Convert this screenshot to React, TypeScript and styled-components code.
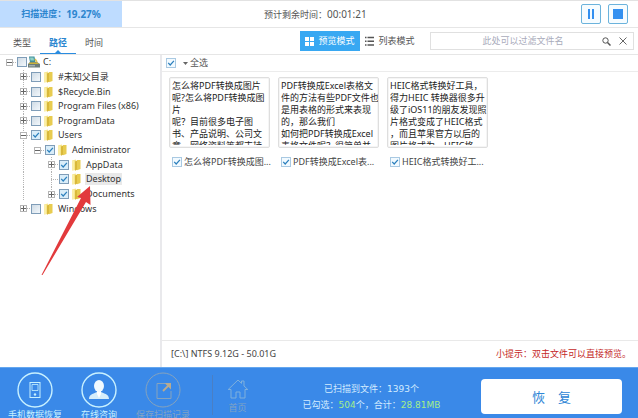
import React from "react";
import styled, { createGlobalStyle, css } from "styled-components";

const GlobalStyle = createGlobalStyle`
  * { box-sizing: border-box; }
  body {
    margin: 0;
    overflow: hidden;
    background: #fff;
    color: #444;
    font: 9px/12px "Noto Sans", "Noto Sans CJK SC", sans-serif;
  }
  button, input { font: inherit; color: inherit; }
`;

const Window = styled.div`
  height: 100vh;
  display: flex;
  flex-direction: column;
  border-top: 1px solid #e2e2e2;
`;

const Header = styled.header`
  flex: none;
  height: 27px;
  display: flex;
  align-items: center;
  border-bottom: 1px solid #e6e6e6;
`;

const Progress = styled.div`
  align-self: stretch;
  width: 122px;
  display: flex;
  align-items: center;
  justify-content: center;
  background: #bedcff;
  color: #2e86cf;
  font-weight: 700;
`;

const Remaining = styled.div`
  flex: 1;
  padding-left: 142px;
  color: #555;
`;

const Figure = styled.span`
  font-size: 10px;
`;

const HeaderActions = styled.div`
  display: flex;
  gap: 7px;
  padding-right: 10px;
`;

const ControlButton = styled.button`
  width: 20px;
  height: 20px;
  padding: 0;
  display: grid;
  place-items: center;
  border: 1px solid #6bb3dc;
  border-radius: 2px;
  background: #f6fcff;
  color: #3390f0;
`;

const Toolbar = styled.div`
  flex: none;
  height: 27px;
  display: flex;
  align-items: center;
  border-bottom: 1px solid #e6e6e6;
`;

const Tabs = styled.nav`
  align-self: stretch;
  flex: 1;
  display: flex;
  padding-left: 4px;
`;

const Tab = styled.button<{ $active?: boolean }>`
  position: relative;
  width: 36px;
  padding: 4px 0 0;
  border: 0;
  border-bottom: 1px solid transparent;
  background: none;
  color: #555;
  ${(p) =>
    p.$active &&
    css`
      color: #2a86d0;
      font-weight: 700;
      border-bottom-color: #2a8ce0;
      &::after {
        content: "";
        position: absolute;
        left: 15px;
        bottom: 0;
        border: 3px solid transparent;
        border-top: 0;
        border-bottom-color: #2a8ce0;
      }
    `}
`;

const ModeButton = styled.button<{ $active?: boolean }>`
  height: 20px;
  width: 60px;
  padding: 0;
  display: flex;
  align-items: center;
  justify-content: center;
  gap: 4px;
  border: 0;
  white-space: nowrap;
  background: ${(p) => (p.$active ? "#38a8f2" : "none")};
  color: ${(p) => (p.$active ? "#fff" : "#555")};
`;

const SearchBox = styled.div`
  width: 204px;
  height: 18px;
  margin: 0 4px 0 10px;
  padding-right: 6px;
  display: flex;
  align-items: center;
  gap: 8px;
  border: 1px solid #e0e0e0;
`;

const SearchInput = styled.input`
  flex: 1;
  min-width: 0;
  padding: 0 0 0 21px;
  border: 0;
  outline: 0;
  background: none;
  text-align: center;
  &::placeholder { color: #a9abbb; opacity: 1; }
`;

const IconButton = styled.button`
  padding: 0;
  display: flex;
  border: 0;
  background: none;
  color: #555;
`;

const Body = styled.main`
  flex: 1;
  min-height: 0;
  display: flex;
`;

const TreePane = styled.aside`
  position: relative;
  flex: none;
  width: 162px;
  border-right: 2px solid #e9e9ec;
`;

const Tree = styled.ul`
  height: 161px;
  margin: 0;
  padding: 0 0 0 3px;
  display: grid;
  grid-auto-rows: 1fr;
  list-style: none;
`;

const TreeRow = styled.li`
  display: flex;
  align-items: center;
  color: #333;
`;

const Cell = styled.span<{ $line?: boolean; $dash?: boolean }>`
  align-self: stretch;
  width: 14px;
  padding-left: 3px;
  display: flex;
  align-items: center;
  background:
    ${(p) => (p.$line ? "repeating-linear-gradient(#b4b4b4 0 1px, transparent 1px 2px) 6px 0 / 1px 100% no-repeat" : "none")},
    ${(p) => (p.$dash ? "repeating-linear-gradient(90deg, #b4b4b4 0 1px, transparent 1px 2px) 6px 50% / 8px 1px no-repeat" : "none")};
`;

const Toggle = styled.button`
  width: 7px;
  height: 7px;
  padding: 0;
  display: block;
  border: 1px solid #b5b5b5;
  background: #fff;
  svg { display: block; }
`;

const CheckBox = styled.input<{ $flat?: boolean }>`
  appearance: none;
  flex: none;
  width: 10px;
  height: 10px;
  margin: 0;
  border: 1px solid ${(p) => (p.$flat ? "#a9c9e2" : "#7f9db8")};
  background: ${(p) => (p.$flat ? "#f5fbff" : "linear-gradient(135deg, #cfdbe5, #f3f8fc)")};
  &:checked {
    background:
      url("data:image/svg+xml,%3Csvg xmlns='http://www.w3.org/2000/svg' viewBox='0 0 8 8'%3E%3Cpath d='M1.2 3.8 3.2 6 6.9 1.8' fill='none' stroke='%232b7fbd' stroke-width='1.2'/%3E%3C/svg%3E") center / 8px 8px no-repeat,
      ${(p) => (p.$flat ? "#f2faff" : "#d9edf9")};
  }
`;

const NodeLabel = styled.label<{ $selected?: boolean; $root?: boolean }>`
  display: flex;
  align-items: center;
  gap: ${(p) => (p.$root ? "2px" : "4px")};
  padding-left: ${(p) => (p.$root ? "1px" : "3px")};
  white-space: nowrap;
  svg { flex: none; }
  span {
    padding: 0 1px;
    background: ${(p) => (p.$selected ? "#e9e9e9" : "none")};
  }
`;

const Arrow = styled.svg`
  position: absolute;
  left: 40px;
  top: 130px;
  pointer-events: none;
`;

const Content = styled.section`
  flex: 1;
  min-width: 0;
  display: flex;
  flex-direction: column;
`;

const SelectAll = styled.label`
  flex: none;
  height: 17px;
  padding-left: 4px;
  display: flex;
  align-items: center;
  border-bottom: 1px solid #ececec;
  color: #555;
  svg { margin: 0 2px 0 7px; }
`;

const Files = styled.div`
  flex: 1;
  min-height: 0;
  padding: 5px 7px;
  display: flex;
  align-items: flex-start;
  gap: 8px;
`;

const FileItem = styled.article`
  width: 101px;
`;

const Preview = styled.div`
  height: 71px;
  padding: 2px 0 0 2px;
  border: 1px solid #dedede;
  border-radius: 2px;
  box-shadow: inset 0 0 0 1px #f5f5f5;
  color: #222;
`;

const PreviewText = styled.div`
  height: 65px;
  overflow: hidden;
  white-space: pre;
`;

const Caption = styled.label`
  margin-top: 8px;
  padding-left: 3px;
  display: flex;
  align-items: center;
  gap: 2px;
  white-space: nowrap;
`;

const StatusBar = styled.div`
  flex: none;
  height: 27px;
  padding: 0 7px 0 9px;
  display: flex;
  align-items: center;
  justify-content: space-between;
  border-top: 1px solid #e9e9e9;
`;

const Tip = styled.span`
  color: #c41f27;
`;

const Footer = styled.footer`
  flex: none;
  height: 51px;
  display: flex;
  align-items: flex-start;
  overflow: hidden;
  border-top: 1px solid #64a7ef;
  background: #3a89e8;
  color: #fff;
`;

const FooterButton = styled.button<{ $muted?: boolean }>`
  width: 64px;
  padding: 4px 0 0;
  display: flex;
  flex-direction: column;
  align-items: center;
  gap: 1px;
  border: 0;
  background: none;
  white-space: nowrap;
  color: ${(p) => (p.$muted ? "#82a3c4" : "#c8f1ff")};
  svg { display: block; }
`;

const FooterNav = styled.nav`
  display: flex;
  padding-left: 3px;
`;

const HomeButton = styled(FooterButton)`
  width: 50px;
  height: 40px;
  margin: 7px 0 0 17px;
  border-left: 1px solid #4a7fc4;
  gap: 3px;
`;

const Stats = styled.div`
  flex: 1;
  padding-top: 13px;
  text-align: center;
  line-height: 16px;
  color: #d4ecff;
  font-family: "DejaVu Sans", "Noto Sans CJK SC", sans-serif;
  p { margin: 0; }
  em { font-style: normal; color: #a5ee8a; }
`;

const RecoverButton = styled.button`
  width: 141px;
  height: 35px;
  margin: 11px 16px 0 0;
  padding: 0;
  border: 0;
  border-radius: 4px;
  background: #fff;
  color: #2e86d6;
  font-size: 13px;
  white-space: pre;
`;

const Folder = () => (
  <svg width="9" height="12" viewBox="0 0 9 12">
    <path d="M0 1.5 4 .5V11L0 11.5Z" fill="#f6e58b" />
    <path d="M3 2.5 6 1 6.4 10 3 11.8Z" fill="#d9b83a" />
    <path d="M5 1h3.5v9L5 11.3Z" fill="#e8cc50" />
    <path d="M1 2v9" stroke="#fff7c5" />
  </svg>
);

const Drive = () => (
  <svg width="12" height="12" viewBox="0 0 12 12">
    <path d="M1 .5h5.500l1 6H2Z" fill="#3f8f9c" />
    <path d="M2 1.500h3.500l.5 3H2.500Z" fill="#8fd0c4" />
    <path d="m0 8 2-2h7l3 2v3.500H0Z" fill="#6c7c7a" />
    <path d="m.5 8 1.500-1.500h7L11.500 8Z" fill="#c9b43c" />
    <path d="M1 9.800h6" stroke="#bcc7c7" />
    <path d="M7 3 9 6" stroke="#e0c24d" strokeWidth="1.500" />
  </svg>
);

type Node = {
  name: string;
  level: number;
  toggle?: "plus" | "minus";
  checked?: boolean;
  selected?: boolean;
  lines?: number[];
};

const nodes: Node[] = [
  { name: "C:", level: 0, toggle: "minus" },
  { name: "#未知父目录", level: 1, toggle: "plus", lines: [1] },
  { name: "$Recycle.Bin", level: 1, toggle: "plus", lines: [1] },
  { name: "Program Files (x86)", level: 1, toggle: "plus", lines: [1] },
  { name: "ProgramData", level: 1, toggle: "plus", lines: [1] },
  { name: "Users", level: 1, toggle: "minus", checked: true, lines: [1] },
  { name: "Administrator", level: 2, toggle: "minus", checked: true, lines: [1] },
  { name: "AppData", level: 3, toggle: "plus", checked: true, lines: [1, 3] },
  { name: "Desktop", level: 3, checked: true, selected: true, lines: [1, 3] },
  { name: "Documents", level: 3, toggle: "plus", checked: true, lines: [1, 3] },
  { name: "Windows", level: 1, toggle: "plus" },
];

const files = [
  {
    name: "怎么将PDF转换成图...",
    text: "怎么将PDF转换成图片\n呢?怎么将PDF转换成图\n片\n呢？目前很多电子图\n书、产品说明、公司文\n章、网络资料等都支持",
  },
  {
    name: "PDF转换成Excel表...",
    text: "PDF转换成Excel表格文\n件的方法有些PDF文件也\n是用表格的形式来表现\n的，那么我们\n如何把PDF转换成Excel\n表格文件呢？很简单并",
  },
  {
    name: "HEIC格式转换好工...",
    text: "HEIC格式转换好工具，\n得力HEIC 转换器很多升\n级了iOS11的朋友发现照\n片格式变成了HEIC格式\n，而且苹果官方以后的\n图片格式为，HEIC格",
  },
];

function TreeNode({ node }: { node: Node }) {
  const id = `node-${node.name}`;
  return (
    <TreeRow>
      {Array.from({ length: node.level + 1 }, (_, i) => (
        <Cell key={i} $line={node.lines?.includes(i)} $dash={i === node.level}>
          {i === node.level && node.toggle && (
            <Toggle aria-label={node.toggle === "plus" ? "展开" : "折叠"}>
              <svg width="5" height="5" stroke="#666">
                <path d={node.toggle === "plus" ? "M0 2.5h5M2.500 0v5" : "M0 2.5h5"} />
              </svg>
            </Toggle>
          )}
        </Cell>
      ))}
      <CheckBox id={id} type="checkbox" defaultChecked={node.checked} />
      <NodeLabel htmlFor={id} $selected={node.selected} $root={node.level === 0}>
        {node.level === 0 ? <Drive /> : <Folder />}
        <span>{node.name}</span>
      </NodeLabel>
    </TreeRow>
  );
}

export default function App() {
  return (
    <Window>
      <GlobalStyle />
      <Header>
        <Progress>
          扫描进度：<Figure>19.27%</Figure>
        </Progress>
        <Remaining>
          预计剩余时间：<Figure>00:01:21</Figure>
        </Remaining>
        <HeaderActions>
          <ControlButton aria-label="暂停">
            <svg width="10" height="10" fill="currentColor">
              <path d="M2 0h2v10H2ZM6 0h2v10H6Z" />
            </svg>
          </ControlButton>
          <ControlButton aria-label="停止">
            <svg width="10" height="10" fill="currentColor">
              <path d="M0 0h10v10H0Z" />
            </svg>
          </ControlButton>
        </HeaderActions>
      </Header>
      <Toolbar>
        <Tabs>
          <Tab>类型</Tab>
          <Tab $active>路径</Tab>
          <Tab>时间</Tab>
        </Tabs>
        <ModeButton $active>
          <svg width="9" height="9" fill="currentColor">
            <path d="M0 0h4v4H0ZM5 0h4v4H5ZM0 5h4v4H0ZM5 5h4v4H5Z" />
          </svg>
          预览模式
        </ModeButton>
        <ModeButton>
          <svg width="9" height="10" fill="none" stroke="currentColor" strokeWidth="1.400">
            <path d="M0 1.500h1.500M2.500 1.500H9M0 5.200h1.500M2.500 5.200H9M0 9h1.500M2.500 9H9" />
          </svg>
          列表模式
        </ModeButton>
        <SearchBox>
          <SearchInput aria-label="过滤文件名" placeholder="此处可以过滤文件名" />
          <IconButton aria-label="搜索">
            <svg width="9" height="9" fill="none" stroke="currentColor">
              <circle cx="3.500" cy="3.500" r="2.700" />
              <path d="m5.500 5.500 3 3" strokeWidth="1.500" />
            </svg>
          </IconButton>
          <IconButton aria-label="清除">
            <svg width="8" height="8" stroke="currentColor">
              <path d="m.5.5 7 7m0-7-7 7" strokeWidth=".9" />
            </svg>
          </IconButton>
        </SearchBox>
      </Toolbar>
      <Body>
        <TreePane>
          <Tree>
            {nodes.map((node) => (
              <TreeNode key={node.name} node={node} />
            ))}
          </Tree>
          <Arrow width="54" height="92">
            <path d="M1.500 90 41 13 37 12 50 1 50.500 20 46 17 2.500 90Z" fill="#e23a3c" />
          </Arrow>
        </TreePane>
        <Content>
          <SelectAll>
            <CheckBox type="checkbox" $flat defaultChecked />
            <svg width="5" height="3" fill="#666">
              <path d="M0 0h5L2.500 3Z" />
            </svg>
            全选
          </SelectAll>
          <Files>
            {files.map((file) => (
              <FileItem key={file.name}>
                <Preview>
                  <PreviewText>{file.text}</PreviewText>
                </Preview>
                <Caption>
                  <CheckBox type="checkbox" $flat defaultChecked />
                  {file.name}
                </Caption>
              </FileItem>
            ))}
          </Files>
          <StatusBar>
            <span>[C:\] NTFS 9.12G - 50.01G</span>
            <Tip>小提示：双击文件可以直接预览。</Tip>
          </StatusBar>
        </Content>
      </Body>
      <Footer>
        <FooterNav>
          <FooterButton>
            <svg width="36" height="36" fill="none" stroke="currentColor">
              <circle cx="18" cy="18" r="17" strokeWidth="1.400" />
              <rect x="13" y="10.500" width="10" height="15" />
              <path d="M15 12.500h6v6h-6Z" strokeWidth=".8" />
              <circle cx="18" cy="22.500" r="1.200" fill="currentColor" stroke="none" />
            </svg>
            手机数据恢复
          </FooterButton>
          <FooterButton>
            <svg width="36" height="36" fill="none">
              <circle cx="18" cy="18" r="17" stroke="currentColor" strokeWidth="1.400" />
              <path d="M8 27c0-4 3-5 8-7h4c5 2 8 3 8 7Z" fill="#d6eefb" />
              <path d="M16 18h4v4l-2 4-2-4Z" fill="#fff" />
              <ellipse cx="18" cy="14" rx="5" ry="6" fill="#f1faff" />
            </svg>
            在线咨询
          </FooterButton>
          <FooterButton $muted>
            <svg width="36" height="36" fill="none" stroke="#86a3bd">
              <circle cx="18" cy="18" r="17" />
              <path d="M20 11.500h-8v15h14V19" />
              <path d="m18 19 6-6" stroke="#b8ab90" strokeWidth="1.800" />
              <path d="M19.500 11H26v6.500Z" fill="#b8ab90" stroke="none" />
            </svg>
            保存扫描记录
          </FooterButton>
          <HomeButton $muted>
            <svg width="22" height="20" fill="none" stroke="#7fb0dc">
              <path d="M4 10.500H1.200L11 1l3.500 3.400V2h2.500v5l3.800 3.500H18v8.500h-5v-6H9v6H4Z" />
            </svg>
            首页
          </HomeButton>
        </FooterNav>
        <Stats>
          <p>已扫描到文件：1393个</p>
          <p>
            已勾选：<em>504</em>个，合计：<em>28.81MB</em>
          </p>
        </Stats>
        <RecoverButton>恢　复</RecoverButton>
      </Footer>
    </Window>
  );
}
